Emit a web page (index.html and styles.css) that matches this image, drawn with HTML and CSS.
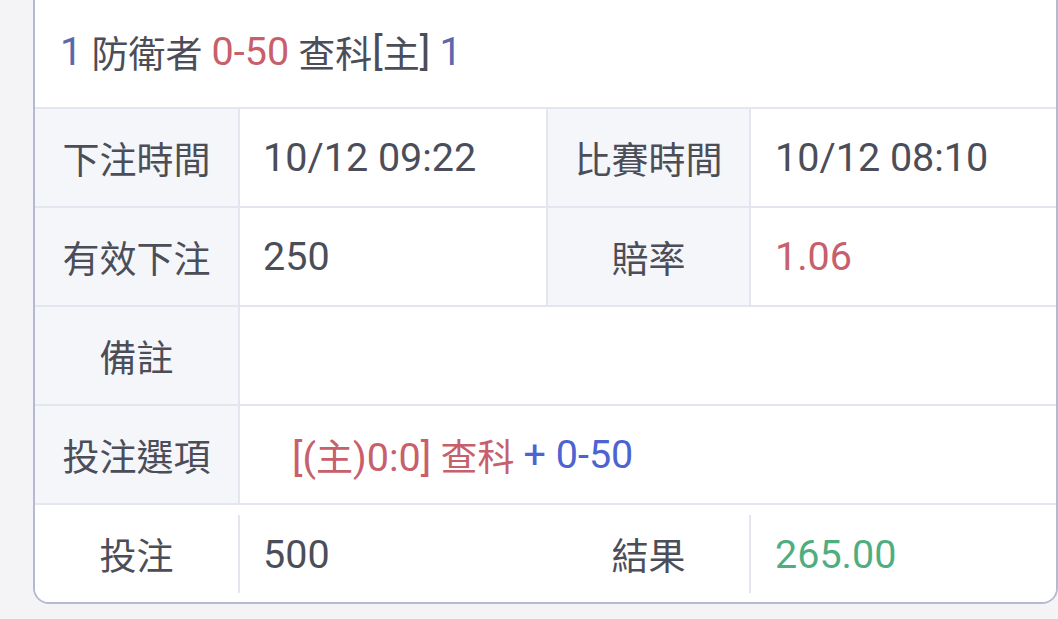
FILE: index.html
```html
<!DOCTYPE html>
<html lang="zh-Hant">
<head>
<meta charset="utf-8">
<link rel="stylesheet" href="styles.css">
</head>
<body>
<div class="card">
  <div class="header">
    <span class="num blue">1</span>&nbsp;防衛者&nbsp;<span class="num red">0-50</span>&nbsp;查科<span class="num">[</span>主<span class="num">]</span>&nbsp;<span class="num blue">1</span>
  </div>
  <div class="grid">
    <div class="cell label"><div class="in">下注時間</div></div>
    <div class="cell value"><div class="in num">10/12 09:22</div></div>
    <div class="cell label"><div class="in">比賽時間</div></div>
    <div class="cell value last"><div class="in num">10/12 08:10</div></div>

    <div class="cell label"><div class="in">有效下注</div></div>
    <div class="cell value"><div class="in num">250</div></div>
    <div class="cell label"><div class="in">賠率</div></div>
    <div class="cell value last"><div class="in num red">1.06</div></div>

    <div class="cell label"><div class="in">備註</div></div>
    <div class="cell value span3 last"><div class="in"></div></div>

    <div class="cell label"><div class="in">投注選項</div></div>
    <div class="cell value span3 last option"><div class="in"><span class="red"><span class="num">[(</span>主<span class="num">)0:0]</span>&nbsp;查科</span>&nbsp;<span class="num blue2">+ 0-50</span></div></div>

    <div class="cell label plain"><div class="in">投注</div></div>
    <div class="cell value plain nosep"><div class="in num">500</div></div>
    <div class="cell label plain"><div class="in">結果</div></div>
    <div class="cell value plain last"><div class="in num green">265.00</div></div>
  </div>
</div>
</body>
</html>
```

FILE: styles.css
```css
* { box-sizing: border-box; }
html, body {
  margin: 0;
  padding: 0;
  background: #f4f4f6;
}
body {
  font-family: "Roboto", "Noto Sans CJK TC", sans-serif;
  color: #4b4e58;
  font-size: 37px;
  height: 619px;
  overflow: hidden;
}
.num { font-size: 39.5px; }
.card {
  margin-left: 33px;
  width: 1025px;
  background: #fff;
  border: 2px solid #b5b9d3;
  border-top: none;
  border-radius: 0 0 16px 16px;
  overflow: hidden;
}
.header {
  height: 107px;
  display: flex;
  align-items: center;
  padding-left: 25px;
  padding-bottom: 4px;
}
.blue { color: #5a69ad; }
.blue2 { color: #4c63d2; }
.red { color: #c7606a; }
.green { color: #4fae7f; }
.grid {
  display: grid;
  grid-template-columns: 205px 308px 203px 1fr;
  grid-auto-rows: 99px;
}
.cell {
  border-top: 2px solid #e4e6ef;
  display: flex;
}
.cell .in {
  flex: 1;
  display: flex;
  align-items: center;
  border-right: 2px solid #e4e6ef;
  white-space: pre;
}
.cell.last .in { border-right: none; }
.label { background: #f5f6fa; }
.label .in { justify-content: center; }
.value .in { padding-left: 23px; }
.value.last .in { padding-left: 24px; }
.value.option .in { padding-left: 52px; }
.span3 { grid-column: span 3; }
.plain { background: #fff; padding: 10px 0 9px; }
.nosep .in { border-right: none; }
```
